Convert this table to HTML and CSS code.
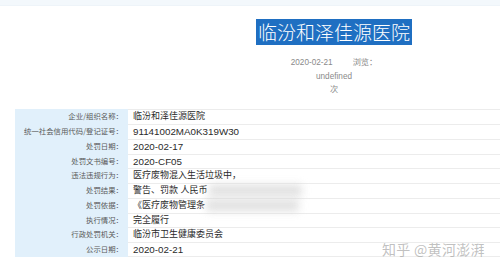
FILE: index.html
```html
<!DOCTYPE html>
<html lang="zh-CN">
<head>
<meta charset="utf-8">
<title>临汾和泽佳源医院</title>
<link rel="stylesheet" href="styles.css">
</head>
<body>
<div class="topbar"></div>
<div class="header">
  <div class="title"><span class="sel">临汾和泽佳源医院</span></div>
  <div class="meta">
    <div><span class="date">2020-02-21</span><span>浏览：</span></div>
    <div>undefined</div>
    <div>次</div>
  </div>
</div>
<div class="info">
  <div class="k">企业/组织名称：</div><div class="v">临汾和泽佳源医院</div>
  <div class="k">统一社会信用代码/登记证号：</div><div class="v num">91141002MA0K319W30</div>
  <div class="k">处罚日期：</div><div class="v num">2020-02-17</div>
  <div class="k">处罚文书编号：</div><div class="v num">2020-CF05</div>
  <div class="k">违法违规行为：</div><div class="v">医疗废物混入生活垃圾中，</div>
  <div class="k">处罚结果：</div><div class="v">警告、罚款 人民币<span class="blur"></span></div>
  <div class="k">处罚依据：</div><div class="v">《医疗废物管理条<span class="blur"></span></div>
  <div class="k">执行情况：</div><div class="v">完全履行</div>
  <div class="k">行政处罚机关：</div><div class="v">临汾市卫生健康委员会</div>
  <div class="k">公示日期：</div><div class="v num last">2020-02-21</div>
</div>
<div class="watermark">知乎 @黄河澎湃</div>
</body>
</html>
```
FILE: styles.css
```css
html, body {
  margin: 0;
  padding: 0;
  background: #ffffff;
}
body {
  position: relative;
  width: 500px;
  height: 271px;
  overflow: hidden;
  font-family: "Liberation Sans", "Noto Sans CJK SC", sans-serif;
  color: #333;
}
.topbar {
  height: 5px;
  background: #f3f8fc;
  border-bottom: 1px solid #eef4f9;
}
.header {
  margin-left: 168px;
  width: 332px;
  text-align: center;
  padding-top: 13px;
}
.title {
  line-height: 26px;
  height: 26px;
}
.sel {
  display: inline-block;
  background: #1f6fc2;
  color: #ffffff;
  font-family: "Noto Sans CJK SC", sans-serif;
  font-weight: 300;
  font-size: 19px;
  line-height: 26px;
  padding: 0 2px;
}
.meta {
  margin-top: 11px;
  font-size: 8.2px;
  line-height: 13.7px;
  color: #8a8a8a;
}
.date {
  margin-right: 20px;
}
.info {
  margin-left: 15px;
  margin-top: 12px;
  display: grid;
  grid-template-columns: 113px 1fr;
  grid-auto-rows: 14.8px;
}
.k {
  background: #e1f0fb;
  text-align: right;
  padding-right: 5px;
  font-family: "Noto Sans CJK SC", sans-serif;
  font-size: 7.4px;
  line-height: 14.8px;
  color: #5a5a5a;
  white-space: nowrap;
}
.v {
  box-sizing: border-box;
  border-top: 1px solid #ececec;
  padding-left: 5px;
  font-size: 9px;
  line-height: 13.8px;
  color: #2a2a2a;
  white-space: nowrap;
}
.v.num {
  font-size: 9.8px;
}
.v.last {
  border-bottom: 1px solid #ececec;
}
.blur {
  display: inline-block;
  vertical-align: middle;
  width: 92px;
  height: 11px;
  margin-left: 2px;
  background: repeating-linear-gradient(90deg, #c8c8c8 0 6px, #e6e6e6 6px 9px);
  filter: blur(4px);
  opacity: 0.7;
}
.watermark {
  position: absolute;
  left: 382px;
  top: 240px;
  font-family: "Noto Sans CJK SC", sans-serif;
  font-size: 14px;
  line-height: 18px;
  color: rgba(140, 140, 140, 0.55);
  letter-spacing: 0.3px;
}
```
